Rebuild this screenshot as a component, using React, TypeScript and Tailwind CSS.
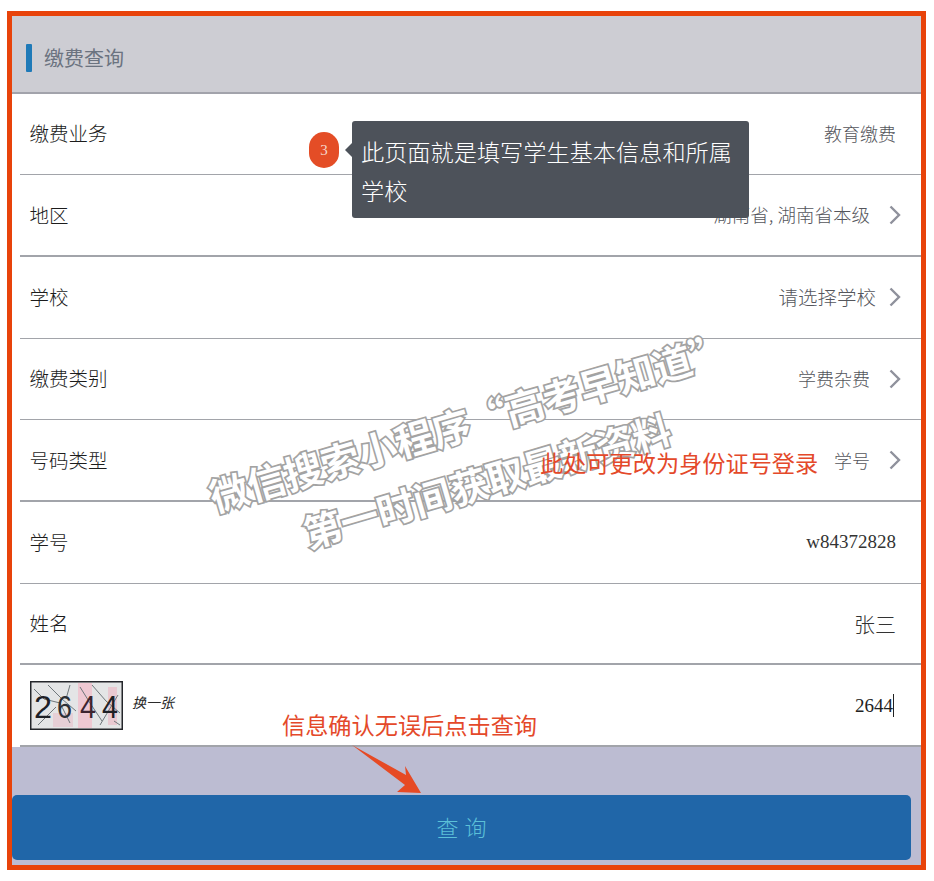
import React from 'react';

const font = '[font-family:"Noto_Sans_CJK_SC","Liberation_Sans",sans-serif]';

interface RowProps {
  label?: string;
  value: string;
  arrow?: boolean;
  thick?: boolean;
  valueClass?: string;
  children?: React.ReactNode;
}

const Chevron = () => (
  <svg width="12" height="20" viewBox="0 0 12 20" fill="none" className="ml-[17px] mr-[20px] shrink-0">
    <path d="M1.5 1.5 L10 10 L1.5 18.5" stroke="#8f919c" strokeWidth="2.4" />
  </svg>
);

const Row: React.FC<RowProps> = ({ label, value, arrow, thick, valueClass, children }) => (
  <div className="relative ml-2 h-[81.7px]">
    <div className="flex h-full items-center justify-between pb-[2px]">
      {children ?? <span className="-mt-[1px] ml-[9.5px] text-[19.5px] font-light text-[#1c1c1c]">{label}</span>}
      <div className="flex items-center">
        <span className={valueClass ?? 'text-[18px] font-light text-[#55565c]'}>{value}</span>
        {arrow ? <Chevron /> : <span className="w-[25px]" />}
      </div>
    </div>
    <div className={`absolute bottom-0 left-0 right-0 bg-[#a2a4aa] ${thick ? 'h-[2px]' : 'h-px'}`} />
  </div>
);

const Captcha = () => (
  <div className="ml-[10px] flex items-center">
    <svg width="93" height="49" viewBox="0 0 93 49" className="shrink-0">
      <rect x="0.75" y="0.75" width="91.5" height="47.5" fill="#e4e5e6" stroke="#24262b" strokeWidth="1.5" />
      <rect x="48" y="2" width="14" height="45" fill="#eec8d2" />
      <rect x="23" y="32" width="20" height="14" fill="#e6cfd6" />
      <rect x="78" y="6" width="9" height="38" fill="#e9c9d1" />
      <path d="M4 8 L14 18 L30 22 L40 42 M18 4 L32 18 L46 30 M50 6 L60 22 L72 40 M62 4 L76 20 L90 32 M8 44 L26 26 M70 44 L88 14 M40 4 L36 18 M84 40 L90 44" stroke="#6f777b" strokeWidth="1" fill="none" />
      <text x="4" y="37" fontSize="31" fontFamily="Liberation Sans" textLength="18" lengthAdjust="spacingAndGlyphs" fill="#1d2026">2</text>
      <text x="27" y="37" fontSize="31" fontFamily="Liberation Sans" textLength="15" lengthAdjust="spacingAndGlyphs" fill="#2c3036">6</text>
      <text x="50" y="37" fontSize="31" fontFamily="Liberation Sans" textLength="16" lengthAdjust="spacingAndGlyphs" fill="#3d2530">4</text>
      <text x="72" y="37" fontSize="31" fontFamily="Liberation Sans" textLength="16" lengthAdjust="spacingAndGlyphs" fill="#1f2126">4</text>
    </svg>
    <span className="-mt-[5px] ml-[9px] text-[14px] italic text-[#2b2b2b]">换一张</span>
  </div>
);

export default function App() {
  return (
    <div className={`relative h-[881px] w-[934px] overflow-hidden bg-white ${font}`}>
      <div className="ml-[7px] mt-[11px] h-[859px] w-[919px] border-[5px] border-[#e8430a] bg-[#bcbcd2]">
        <div className="flex h-[77.6px] items-center border-b-2 border-[#a2a3ab] bg-[#cdcdd3] pt-[8px]">
          <div className="ml-[14px] h-[28px] w-[6px] rounded-[1px] bg-[#1f7ab8]" />
          <span className="ml-[12px] text-[20px] text-[#6b7380]">缴费查询</span>
        </div>
        <div className="bg-white">
          <Row label="缴费业务" value="教育缴费" />
          <Row label="地区" value="湖南省, 湖南省本级" arrow thick valueClass="mr-[2px] text-[18.5px] font-light text-[#55565c]" />
          <Row label="学校" value="请选择学校" arrow valueClass="-mr-[4px] text-[19.5px] font-light text-[#55565c]" />
          <Row label="缴费类别" value="学费杂费" arrow valueClass="mr-[2px] text-[18px] font-light text-[#55565c]" />
          <Row label="号码类型" value="学号" arrow thick valueClass="mr-[2px] text-[18px] font-light text-[#55565c]" />
          <Row label="学号" value="w84372828" valueClass="font-['Liberation_Serif'] text-[19px] text-[#333]" />
          <Row label="姓名" value="张三" valueClass="text-[21px] font-light text-[#333]" thick />
          <Row value="2644" thick valueClass="mr-[2px] font-['Liberation_Serif'] text-[19px] leading-[23px] text-[#222] border-r border-[#222]">
            <Captcha />
          </Row>
        </div>
        <button className="mt-[48px] flex h-[65px] w-[899px] items-center justify-center gap-[6px] rounded-[5px] bg-[#2066a8] pb-[3px] text-[22px] font-light text-[#5cc0d8]">
          <span>查</span>
          <span>询</span>
        </button>
      </div>

      <div className="absolute left-[309px] top-[132px] flex h-[36px] w-[30px] items-center justify-center rounded-full bg-[#e44d26] font-['Liberation_Serif'] text-[15px] text-[#f5d6cc]">
        3
      </div>
      <div className="absolute left-[352px] top-[121px] h-[97px] w-[397px] rounded-[3px] bg-[#4d525a] py-[11px] pl-[9px] pr-[10px] text-[23.2px] font-light leading-[39px] text-white">
        <div className="absolute -left-[7px] top-[22px] h-0 w-0 border-y-[7px] border-r-[7px] border-y-transparent border-r-[#4d525a]" />
        此页面就是填写学生基本信息和所属学校
      </div>

      <div className="absolute left-[208px] top-[388px] w-[540px] -rotate-[16.3deg] font-bold leading-[62px] text-white [-webkit-text-stroke:3.5px_#a3a3a3] [paint-order:stroke_fill]">
        <div className="whitespace-nowrap text-[38.5px] [word-spacing:-9px]">微信搜索小程序 “高考早知道”</div>
        <div className="ml-[80px] whitespace-nowrap text-[38px]">第一时间获取最新资料</div>
      </div>

      <div className="absolute left-[540px] top-[444px] text-[23.2px] leading-[36px] text-[#e4492a]">此处可更改为身份证号登录</div>
      <div className="absolute left-[282px] top-[706px] text-[23.2px] leading-[36px] text-[#e4492a]">信息确认无误后点击查询</div>
      <svg width="74" height="50" viewBox="0 0 74 50" className="absolute left-[350px] top-[744px]">
        <path d="M2 1 L56 31 L55 22 L71 49 L47 48 L55 41 Z" fill="#e64a24" />
      </svg>
    </div>
  );
}
